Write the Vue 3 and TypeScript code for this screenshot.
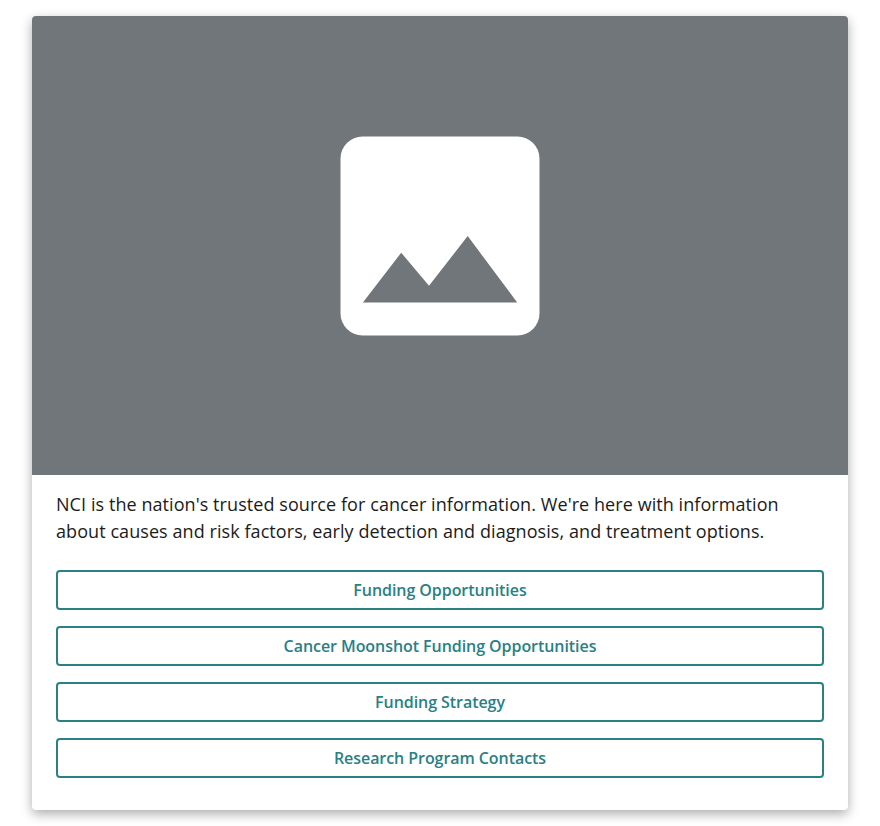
<script setup lang="ts">
const links: string[] = [
  'Funding Opportunities',
  'Cancer Moonshot Funding Opportunities',
  'Funding Strategy',
  'Research Program Contacts',
]
</script>

<template>
  <main class="page">
    <article class="card">
      <div class="media">
        <svg class="placeholder" viewBox="0 0 200 200" aria-hidden="true">
          <path
            fill="#fff"
            fill-rule="evenodd"
            d="M22.5 .5H177.5A22 22 0 0 1 199.5 22.5V177.4A22 22 0 0 1 177.5 199.4H22.5A22 22 0 0 1 .5 177.4V22.5A22 22 0 0 1 22.5 .5ZM61.2 116.7L22.9 166.4H177.2L127.7 100.1L89 149.7Z"
          />
        </svg>
      </div>
      <div class="body">
        <p class="description">
          NCI is the nation's trusted source for cancer information. We're here with information
          about causes and risk factors, early detection and diagnosis, and treatment options.
        </p>
        <nav class="links">
          <a v-for="link in links" :key="link" class="button" href="#">{{ link }}</a>
        </nav>
      </div>
    </article>
  </main>
</template>

<style>
body {
  background: #fff;
}
</style>

<style scoped>
.page {
  padding: 16px 32px;
  font-family: 'Open Sans', sans-serif;
  color: #1b1b1b;
}
.card {
  overflow: hidden;
  border-radius: 4px;
  background: #fff;
  box-shadow: 0 4px 12px rgba(0, 0, 0, 0.33);
}
.media {
  display: flex;
  align-items: center;
  justify-content: center;
  height: 459px;
  background: #71767a;
}
.placeholder {
  width: 200px;
  height: 200px;
  margin-bottom: 19px;
}
.body {
  padding: 16px 24px 32px;
}
.description {
  margin: 0 0 25px;
  font-size: 18px;
  line-height: 27px;
  letter-spacing: 0.071px;
}
.links {
  display: flex;
  flex-direction: column;
  gap: 16px;
}
.button {
  box-sizing: border-box;
  height: 40px;
  border: 2px solid #298085;
  border-radius: 4px;
  color: #298085;
  font-size: 16px;
  font-weight: 600;
  line-height: 36px;
  letter-spacing: -0.06px;
  text-align: center;
  text-decoration: none;
}
</style>
